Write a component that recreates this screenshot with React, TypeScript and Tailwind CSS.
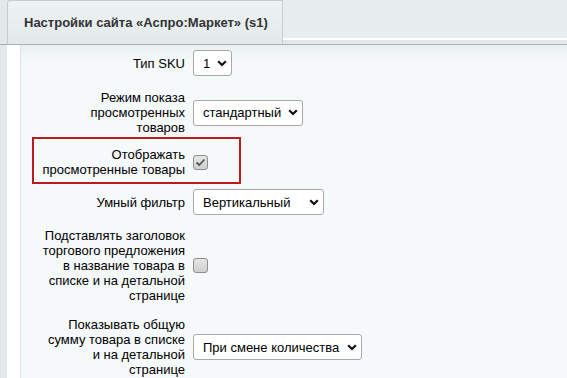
import React from 'react';

const font = { fontFamily: '"Liberation Sans", Arial, sans-serif' };

function Chevron() {
  return (
    <svg width="10" height="7" viewBox="0 0 10 7" className="shrink-0">
      <path d="M1.2 1.2 L5 5 L8.8 1.2" fill="none" stroke="#111" strokeWidth="2.2" />
    </svg>
  );
}

function FakeSelect({ value, width }: { value: string; width: string }) {
  return (
    <div
      className={`flex h-[26px] shrink-0 items-center justify-between rounded-[3px] border border-[#a9a9a9] bg-white pl-[9px] pr-[4px] text-[13px] leading-none text-black ${width}`}
    >
      <span className="whitespace-nowrap">{value}</span>
      <Chevron />
    </div>
  );
}

function Checkbox({ checked }: { checked?: boolean }) {
  return (
    <div className="flex h-[15px] w-[15px] shrink-0 items-center justify-center rounded-[3px] border border-[#8d8d8d] bg-gradient-to-b from-[#e6e6e6] to-[#cfcfcf]">
      {checked && (
        <svg width="11" height="9" viewBox="0 0 11 9">
          <path d="M1.5 4.5 L4.2 7 L9.5 1.5" fill="none" stroke="#555" strokeWidth="1.8" />
        </svg>
      )}
    </div>
  );
}

function Row({ label, children, className = 'py-[6px]' }: { label: React.ReactNode; children: React.ReactNode; className?: string }) {
  return (
    <div className={`relative flex items-center ${className}`}>
      <div className="w-[164px] shrink-0 pl-[20px] text-right text-[13px] leading-[15px] text-black">{label}</div>
      <div className="ml-[8px] flex items-center">{children}</div>
    </div>
  );
}

export default function App() {
  return (
    <div className="flex h-[378px] w-[567px] flex-col overflow-hidden bg-[#e3e9eb]" style={font}>
      {/* Tabs bar */}
      <div className="flex h-[44px] shrink-0 pl-[7px]">
        <div className="flex h-full w-[276px] items-center rounded-tl-[3px] border-x border-t border-[#c5cdd0] bg-gradient-to-b from-[#eef2f3] to-[#e3e9eb] pl-[16px] pt-[1px] text-[13px] font-bold text-[#333]">
          Настройки сайта «Аспро:Маркет» (s1)
        </div>
        <div className="flex flex-1 flex-col">
          <div className="h-[38px] bg-[#e8edee]" />
          <div className="h-[2px] bg-white" />
          <div className="h-[4px] bg-[#e3e9eb]" />
        </div>
      </div>
      <div className="h-[1px] shrink-0 bg-[#a9b1b4]" />

      {/* Body */}
      <div className="flex flex-1">
        <div className="w-[7px] shrink-0 bg-[#e3e9eb]" />
        <div className="w-[13px] shrink-0 bg-white" />
        <div className="w-[1px] shrink-0 bg-[#d7e3e6]" />
        <div className="flex flex-1 flex-col bg-[linear-gradient(#e9eeef,#f5f9f9_16px)]">
          <Row label="Тип SKU" className="pt-[5px] pb-[8px]">
            <FakeSelect value="1" width="w-[39px]" />
          </Row>
          <Row label="Режим показа просмотренных товаров">
            <FakeSelect value="стандартный" width="w-[110px]" />
          </Row>
          <Row label="Отображать просмотренные товары">
            <Checkbox checked />
            <div className="absolute left-[11px] top-[-4px] h-[47px] w-[209px] border-2 border-[#b81c1c]" />
          </Row>
          <Row label="Умный фильтр">
            <FakeSelect value="Вертикальный" width="w-[131px]" />
          </Row>
          <Row label="Подставлять заголовок торгового предложения в название товара в списке и на детальной странице" className="pt-[7px] pb-[6px]">
            <Checkbox />
          </Row>
          <Row label="Показывать общую сумму товара в списке и на детальной странице" className="pt-[8px] pb-[6px]">
            <FakeSelect value="При смене количества" width="w-[169px]" />
          </Row>
        </div>
      </div>
    </div>
  );
}
